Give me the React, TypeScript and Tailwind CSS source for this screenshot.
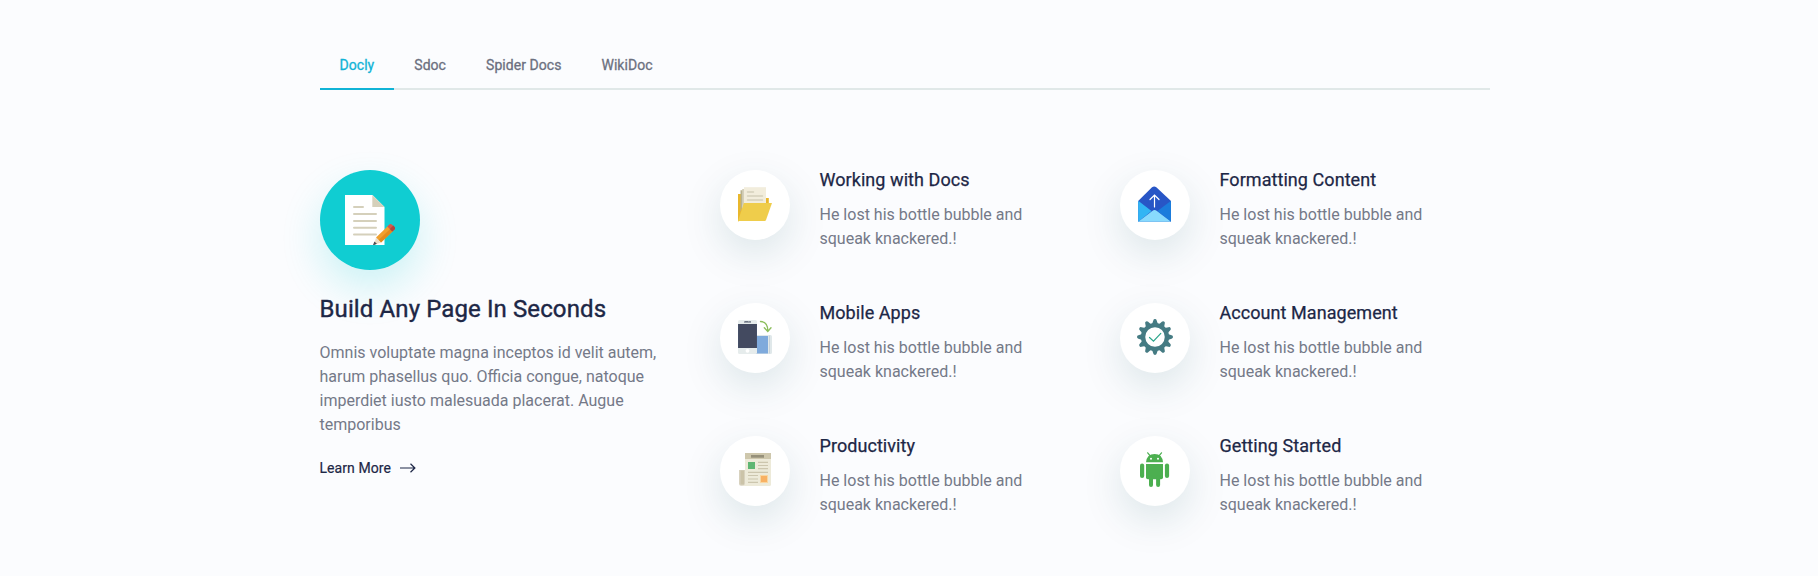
import type { ReactNode } from "react";

const tabs = ["Docly", "Sdoc", "Spider Docs", "WikiDoc"];

function DocumentIcon() {
  return (
    <svg className="block size-[50px]" viewBox="0 0 50 50">
      <path d="M0 0h27.500L39.500 12v38H0z" fill="#fff" />
      <path d="M27.300 0l12.200 12H27.300z" fill="#d5d0bb" />
      <path d="M9 12h9M9 19h22M9 26h22M9 32.800h22M9 39.500h22" stroke="#d5d0bb" strokeWidth="2" strokeLinecap="round" />
      <path d="M31 42.500L43 31l5 5-12 11.500z" fill="#f0a02e" />
      <path d="M33.600 45.100L45.400 33.700l2.600 2.300-12 11.500z" fill="#e28b1d" />
      <path d="M31 42.500l5 5-7 2.500z" fill="#ecdcc4" />
      <path d="M29.400 46.400l2.500 2.300-4.100 1.900z" fill="#474a52" />
      <path d="M42.300 31.500l2-2q1.200-1.200 2.500 0l2.700 2.500q1.100 1.200 0 2.400l-2.200 2z" fill="#d7584b" />
      <path d="M44.900 34l3.500-3.400 1.200 1.400q1.100 1.200 0 2.400l-2.300 2z" fill="#b1453d" />
    </svg>
  );
}

function FolderIcon() {
  return (
    <svg className="block size-[36px]" viewBox="0 0 36 36">
      <path d="M1 8h4v26L1 35.500z" fill="#e9b72c" />
      <path d="M29 12h2.800V18H29z" fill="#e9b72c" />
      <path d="M3.500 4.300h2.500V18l-2.500 8z" fill="#b8b28f" />
      <path d="M5.200 3H8v15l-2.800 8z" fill="#d5d0bb" />
      <path d="M7 1.200h22V20H7z" fill="#f2eddc" />
      <path d="M10.500 6h6M10.500 10h15M10.500 14h15" stroke="#d5d0bb" strokeWidth="1.500" strokeLinecap="round" />
      <path d="M1 35L6.800 17H35l-6 17q-.4 1-1.200 1z" fill="#efcd4b" />
    </svg>
  );
}

function EnvelopeIcon() {
  return (
    <svg className="block size-[36px]" viewBox="0 0 36 36">
      <path d="M1.200 14.900L15 1.200q2.200-1.600 4.300 0L34 15v20.700H1.200z" fill="#2856c6" />
      <path d="M1.200 14.700L14.500 25 1.200 35.700z" fill="#32b5f4" />
      <path d="M34 14.700L20.500 25 34 35.700z" fill="#1b7cdc" />
      <path d="M1.200 35.700L15.300 25q2.200-2 4.600 0L34 35.700z" fill="#88dafd" />
      <path d="M17.500 21V9M13 13.500L17.500 9l4.500 4.500" stroke="#fff" strokeWidth="1.200" fill="none" strokeLinecap="round" />
    </svg>
  );
}

function MobileIcon() {
  return (
    <svg className="block size-[36px]" viewBox="0 0 36 36">
      <path d="M19 16h14.500q1.500 0 1.500 1.500v16q0 1.500-1.500 1.500H19z" fill="#e0e8ea" />
      <path d="M32 16.500h1v18h-1z" fill="#c8d3da" />
      <path d="M19 17h12v17.500H19z" fill="#7faadc" />
      <rect x="1" y="1" width="19" height="34" rx="1.500" fill="#e6ecec" />
      <path d="M1 5h19v24H1z" fill="#464f67" />
      <path d="M2 5h17v24H2z" fill="#434a60" />
      <rect x="7" y="2" width="7" height="2" fill="#9aa1aa" />
      <path d="M8 2.500h3M12.500 2.500h1" stroke="#6d7584" />
      <circle cx="10.500" cy="31.800" r="1.900" fill="#fff" />
      <path d="M23.500 2.500q7.300.2 7.300 9.500M27.300 8.700l3.500 3.800L34 8.700" stroke="#8cbe5d" strokeWidth="1.350" fill="none" strokeLinecap="round" />
    </svg>
  );
}

function GearIcon() {
  return (
    <svg className="block size-[36px]" viewBox="0 0 36 36">
      <g fill="#457b83">
        {Array.from({ length: 12 }, (_, i) => (
          <path
            key={i}
            d="M15 5.200L16.300 1.400Q16.600 0 18 0T19.700 1.400l1.300 3.800z"
            transform={`rotate(${i * 30} 18 18)`}
          />
        ))}
      </g>
      <circle cx="18" cy="18" r="11.900" fill="none" stroke="#457b83" strokeWidth="4.300" />
      <path d="M12.500 18.500l4 3.700 7.300-7.800" stroke="#2ba58b" strokeWidth="1.200" fill="none" strokeLinecap="round" />
    </svg>
  );
}

function NewspaperIcon() {
  return (
    <svg className="block size-[36px]" viewBox="0 0 36 36">
      <path d="M2 18h6.500v15.800H4q-2 0-2-2z" fill="#d8d2bf" />
      <path d="M3.500 18.500h3.500v14H3.500z" fill="#cbc3a8" />
      <path d="M8 1h26v31.500q0 1.500-1.500 1.500H4q4 0 4-3z" fill="#edead9" />
      <path d="M8 1h26v6H8z" fill="#cec7ac" />
      <path d="M14 3h13v2.700H14z" fill="#969079" />
      <path d="M11 10h7v7h-7z" fill="#5fb673" />
      <path d="M23 23h8v8h-8z" fill="#f9d6a0" />
      <path d="M24 24h6v6h-6z" fill="#f8b163" />
      <path d="M21 10.400h10M21 13.500h10M21 16.700h10M11 20.400h20M11 23.500h10M11 27h10M11 30.400h10" stroke="#ccc6ae" strokeWidth="1.200" />
    </svg>
  );
}

function AndroidIcon() {
  return (
    <svg className="block size-[36px]" viewBox="0 0 36 36" fill="#4caf50">
      <path d="M9 10.300Q9.800 2 17.600 2t8.400 8.300z" />
      <path d="M13 3.700L10.700.8M22.200 3.700L24.500.8" stroke="#4caf50" strokeWidth="1.200" strokeLinecap="round" />
      <circle cx="14" cy="6.700" r="1" fill="#fff" />
      <circle cx="21" cy="6.700" r="1" fill="#fff" />
      <path d="M9 12h17v13.500q0 1.800-1.800 1.800H10.800Q9 27.300 9 25.500z" />
      <rect x="3" y="11.500" width="4.200" height="14.500" rx="2.100" />
      <rect x="27.900" y="11.500" width="4.200" height="14.500" rx="2.100" />
      <rect x="12" y="23" width="4" height="12" rx="2" />
      <rect x="19.100" y="23" width="4" height="12" rx="2" />
    </svg>
  );
}

const features: { title: string; icon: ReactNode }[] = [
  { title: "Working with Docs", icon: <FolderIcon /> },
  { title: "Formatting Content", icon: <EnvelopeIcon /> },
  { title: "Mobile Apps", icon: <MobileIcon /> },
  { title: "Account Management", icon: <GearIcon /> },
  { title: "Productivity", icon: <NewspaperIcon /> },
  { title: "Getting Started", icon: <AndroidIcon /> },
];

function Feature({ title, icon }: { title: string; icon: ReactNode }) {
  return (
    <div className="flex h-[133px] items-start gap-[30px]">
      <div className="flex size-[70px] shrink-0 items-center justify-center rounded-full bg-white pb-[2px] shadow-[0_14px_40px_0_rgba(4,80,85,0.13)]">
        {icon}
      </div>
      <div className="w-[240px]">
        <h4 className="text-[18px] leading-[20px] font-normal tracking-[0.06px] text-[#1d2746] [-webkit-text-stroke:0.25px_#1d2746]">
          {title}
        </h4>
        <p className="mt-[13px] text-[16px] leading-[24px] text-[#747988]">
          He lost his bottle bubble and squeak knackered.!
        </p>
      </div>
    </div>
  );
}

export default function App() {
  return (
    <section className="h-[576px] overflow-hidden bg-[#fbfcfe] pr-[9px] font-[Roboto,sans-serif]">
      <div className="mx-auto w-[1170px] pt-[50px]">
        <nav className="flex h-[40px] border-b-2 border-[#e0e8e8] text-[14px] leading-[24px] tracking-[0.05px] [-webkit-text-stroke-width:0.3px]">
          {tabs.map((tab, i) => (
            <a
              key={tab}
              className={
                i === 0
                  ? "h-[40px] border-b-2 border-[#10b3d6] px-5 pt-[3px] text-[#10b3d6]"
                  : "h-[40px] px-5 pt-[3px] text-[#6b707f]"
              }
            >
              {tab}
            </a>
          ))}
        </nav>
        <div className="mt-[80px] flex">
          <div className="w-[400px] shrink-0 pr-[30px]">
            <div className="flex size-[100px] items-center justify-center rounded-full bg-[#10cdd2] shadow-[0_18px_40px_0_rgba(16,205,210,0.2)]">
              <DocumentIcon />
            </div>
            <h2 className="mt-[25px] text-[24px] leading-[29px] font-normal tracking-[0.11px] text-[#1d2746] [-webkit-text-stroke:0.4px_#1d2746]">
              Build Any Page In Seconds
            </h2>
            <p className="mt-[17px] w-[350px] text-[16px] leading-[24px] text-[#747988]">
              Omnis voluptate magna inceptos id velit autem, harum phasellus quo. Officia congue, natoque imperdiet iusto malesuada placerat. Augue temporibus
            </p>
            <a className="mt-[19px] flex items-center gap-[8px] text-[14px] leading-[24px] tracking-[0.07px] text-[#1d2746] [-webkit-text-stroke:0.2px_#1d2746]">
              Learn More
              <svg className="h-[10px] w-[17px]" viewBox="0 0 17 10" fill="none" stroke="currentColor" strokeWidth="1.200">
                <path d="M1 5h15M11.500.8L15.900 5l-4.400 4.200" />
              </svg>
            </a>
          </div>
          <div className="grid shrink-0 grid-cols-[400px_370px]">
            {features.map((feature) => (
              <Feature key={feature.title} {...feature} />
            ))}
          </div>
        </div>
      </div>
    </section>
  );
}
